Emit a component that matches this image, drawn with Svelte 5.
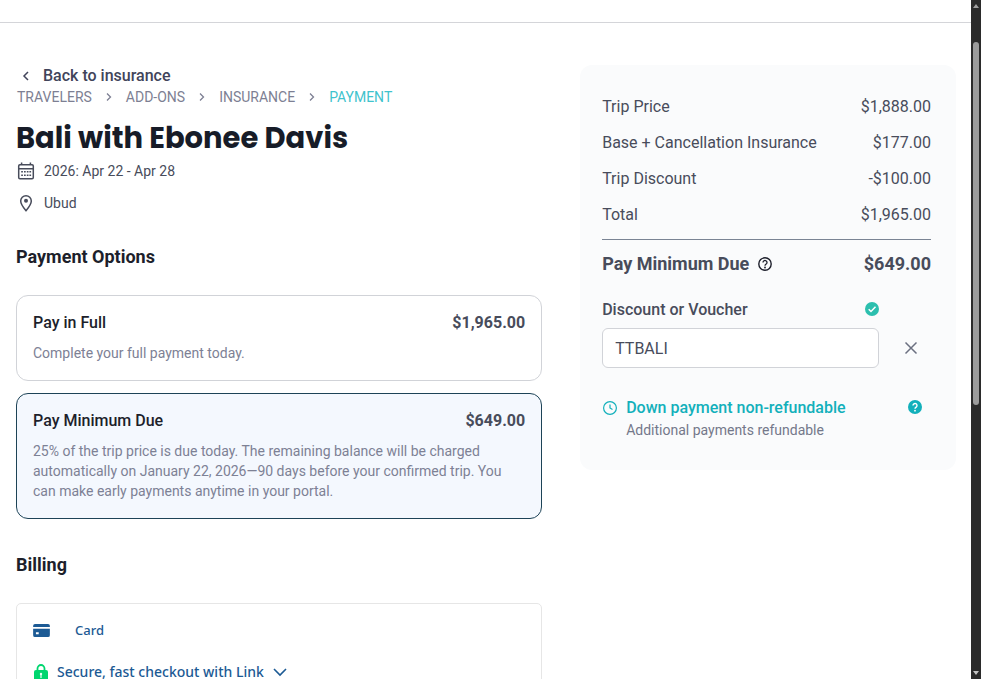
<script lang="ts">
	type Option = {
		id: string;
		title: string;
		amount: string;
		text: string;
	};

	const steps = ['Travelers', 'Add-ons', 'Insurance', 'Payment'];
	const currentStep = 'Payment';

	const options: Option[] = [
		{
			id: 'full',
			title: 'Pay in Full',
			amount: '$1,965.00',
			text: 'Complete your full payment today.'
		},
		{
			id: 'minimum',
			title: 'Pay Minimum Due',
			amount: '$649.00',
			text: '25% of the trip price is due today. The remaining balance will be charged automatically on January 22, 2026—90 days before your confirmed trip. You can make early payments anytime in your portal.'
		}
	];

	const lines = [
		{ label: 'Trip Price', value: '$1,888.00' },
		{ label: 'Base + Cancellation Insurance', value: '$177.00' },
		{ label: 'Trip Discount', value: '-$100.00' },
		{ label: 'Total', value: '$1,965.00' }
	];

	let selected = $state('minimum');
	let voucher = $state('TTBALI');

	const due = $derived(options.find((option) => option.id === selected) ?? options[0]);
</script>

<div class="window">
	<div class="page">
		<header class="topbar"></header>

		<main class="checkout">
			<div class="details">
				<a class="back" href="#insurance">
					<svg width="20" height="20" viewBox="0 0 20 20" aria-hidden="true">
						<path d="M12 6 8 10l4 4" fill="none" stroke="currentColor" stroke-width="1.5" />
					</svg>
					Back to insurance
				</a>

				<nav class="steps" aria-label="Checkout steps">
					{#each steps as step, i (step)}
						{#if i > 0}
							<svg width="10" height="10" viewBox="0 0 10 10" aria-hidden="true">
								<path d="m3 1.5 3.5 3.5L3 8.5" fill="none" stroke="currentColor" stroke-width="1.3" />
							</svg>
						{/if}
						<a class="step" class:step--current={step === currentStep} href={`#${step.toLowerCase()}`}>
							{step}
						</a>
					{/each}
				</nav>

				<h1>Bali with Ebonee Davis</h1>

				<div class="facts">
					<p class="fact">
						<svg width="20" height="20" viewBox="0 0 20 20" aria-hidden="true">
							<g fill="none" stroke="currentColor" stroke-width="1.5">
								<rect x="2.7" y="3.7" width="14.6" height="14" rx="1.2" />
								<path d="M2.7 7.8h14.6M5.6 1.5v2.4M14.4 1.5v2.4" />
							</g>
							<path
								d="M5.2 10h1.7v1.6H5.2zM8 10h1.7v1.6H8zM10.8 10h1.7v1.6h-1.7zM13.4 10h1.7v1.6h-1.7zM5.2 13.4h1.7V15H5.2zM8 13.4h1.7V15H8zM10.8 13.4h1.7V15h-1.7zM13.4 13.4h1.7V15h-1.7z"
								fill="currentColor"
							/>
						</svg>
						2026: Apr 22 - Apr 28
					</p>
					<p class="fact">
						<svg width="20" height="20" viewBox="0 0 20 20" aria-hidden="true">
							<path
								d="M10 17.7C6.5 13.6 4.7 10.6 4.7 8a5.3 5.3 0 0 1 10.6 0c0 2.6-1.8 5.6-5.3 9.7z"
								fill="none"
								stroke="currentColor"
								stroke-width="1.5"
							/>
							<circle cx="10" cy="7.8" r="2" fill="currentColor" />
						</svg>
						Ubud
					</p>
				</div>

				<h2>Payment Options</h2>
				<div class="options">
					{#each options as option (option.id)}
						<button
							class="option"
							class:option--selected={option.id === selected}
							type="button"
							aria-pressed={option.id === selected}
							onclick={() => (selected = option.id)}
						>
							<span class="option__head">
								<span class="option__title">{option.title}</span>
								<span class="option__amount">{option.amount}</span>
							</span>
							<span class="option__text">{option.text}</span>
						</button>
					{/each}
				</div>

				<h2>Billing</h2>
				<section class="billing" aria-label="Billing">
					<button class="method" type="button">
						<svg width="17" height="13" viewBox="0 0 18 14" aria-hidden="true">
							<path d="M2 0h14a2 2 0 0 1 2 2v1.2H0V2a2 2 0 0 1 2-2z" fill="currentColor" />
							<path
								d="M0 5h18v7a2 2 0 0 1-2 2H2a2 2 0 0 1-2-2zM3 9v2h3V9z"
								fill="currentColor"
								fill-rule="evenodd"
							/>
						</svg>
						Card
					</button>
					<button class="link-pay" type="button">
						<svg width="14" height="17" viewBox="0 0 14 17" aria-hidden="true">
							<path d="M3.5 8V4.5a3.5 3.5 0 0 1 7 0V8" fill="none" stroke="#00d66f" stroke-width="1.8" />
							<rect y="6" width="14" height="11" rx="2" fill="#00d66f" />
							<circle cx="7" cy="10" r="1.2" fill="#e8fff4" />
							<path d="M6.4 10.5h1.2V14H6.4z" fill="#e8fff4" />
						</svg>
						Secure, fast checkout with Link
						<svg width="14" height="10" viewBox="0 0 14 10" aria-hidden="true">
							<path d="m1 2 6 6 6-6" fill="none" stroke="currentColor" stroke-width="1.6" />
						</svg>
					</button>
				</section>
			</div>

			<aside class="summary" aria-label="Price summary">
				<dl>
					{#each lines as line (line.label)}
						<div class="line">
							<dt>{line.label}</dt>
							<dd>{line.value}</dd>
						</div>
					{/each}
				</dl>

				<div class="due">
					<span>{due.title}</span>
					<button class="due__help" type="button" aria-label="About this amount">
						<svg width="14" height="14" viewBox="0 0 14 14" aria-hidden="true">
							<circle cx="7" cy="7" r="6.2" fill="none" stroke="currentColor" stroke-width="1.4" />
							<path
								d="M5 5.5a2 2 0 1 1 3.2 1.6C7.4 7.7 7 8 7 8.7"
								fill="none"
								stroke="currentColor"
								stroke-width="1.3"
							/>
							<circle cx="7" cy="10.5" r="0.9" fill="currentColor" />
						</svg>
					</button>
					<strong>{due.amount}</strong>
				</div>

				<div class="voucher">
					<label for="voucher">Discount or Voucher</label>
					<svg class="voucher__ok" width="14" height="14" viewBox="0 0 14 14" aria-hidden="true">
						<circle cx="7" cy="7" r="7" fill="#2cbfae" />
						<path d="m3.7 7.2 2.3 2.3 4.5-4.7" fill="none" stroke="#fff" stroke-width="1.5" />
					</svg>
					<input id="voucher" type="text" bind:value={voucher} />
					<button type="button" aria-label="Remove voucher" onclick={() => (voucher = '')}>
						<svg width="14" height="14" viewBox="0 0 14 14" aria-hidden="true">
							<path d="m1.5 1.5 11 11m0-11-11 11" stroke="currentColor" stroke-width="1.5" />
						</svg>
					</button>
				</div>

				<div class="refund">
					<svg width="16" height="16" viewBox="0 0 16 16" aria-hidden="true">
						<g fill="none" stroke="currentColor" stroke-width="1.2">
							<circle cx="8" cy="8" r="6.4" />
							<path d="M8 4.5V8l2.5 1.5" />
						</g>
					</svg>
					<p>
						<strong>Down payment non-refundable</strong>
						<span>Additional payments refundable</span>
					</p>
					<button type="button" aria-label="Refund policy">
						<svg width="14" height="14" viewBox="0 0 14 14" aria-hidden="true">
							<circle cx="7" cy="7" r="7" fill="currentColor" />
							<path
								d="M5 5.5a2 2 0 1 1 3.2 1.6C7.4 7.7 7 8 7 8.7"
								fill="none"
								stroke="#fff"
								stroke-width="1.4"
							/>
							<circle cx="7" cy="10.7" r="0.9" fill="#fff" />
						</svg>
					</button>
				</div>
			</aside>
		</main>
	</div>

	<div class="scrollbar" aria-hidden="true">
		<svg width="6" height="4" viewBox="0 0 6 4"><path d="M3 0l3 4H0z" fill="#a0a0a0" /></svg>
		<div class="scrollbar__track">
			<div class="scrollbar__thumb"></div>
		</div>
		<svg width="6" height="4" viewBox="0 0 6 4"><path d="M0 0h6L3 4z" fill="#c4c4c4" /></svg>
	</div>
</div>

<style>
	:global(body) {
		background: #fff;
		color: #484c5b;
		font: 16px/24px Roboto, 'Liberation Sans', sans-serif;
	}

	h1,
	h2,
	p,
	dl,
	dd {
		margin: 0;
	}

	svg {
		display: block;
		flex: none;
	}

	a {
		color: inherit;
		text-decoration: none;
	}

	button {
		padding: 0;
		border: 0;
		background: none;
		color: inherit;
		font: inherit;
		text-align: left;
		cursor: pointer;
	}

	.window {
		display: flex;
		height: 100vh;
	}

	.page {
		flex: 1;
		min-width: 0;
		overflow: hidden;
	}

	.topbar {
		height: 22px;
		border-bottom: 1px solid #d4d5d9;
	}

	.checkout {
		display: grid;
		grid-template-columns: 7fr 5fr;
		align-items: start;
		gap: 38px;
		padding: 42px 15px 0 16px;
	}

	.back {
		display: flex;
		align-items: center;
		gap: 7px;
		color: #41445a;
		font-weight: 500;
		line-height: 22px;
	}

	.steps {
		display: flex;
		align-items: center;
		gap: 12px;
		padding-left: 1px;
		color: #7d7f93;
		font-size: 14px;
		line-height: 20px;
	}

	.step {
		text-transform: uppercase;
	}

	.step--current {
		color: #3fc3cd;
	}

	h1 {
		margin: 12px 0 4px;
		color: #171c28;
		font: 700 29px/38px Poppins, Inter, sans-serif;
	}

	.facts {
		display: grid;
		gap: 12px;
	}

	.fact {
		display: flex;
		align-items: center;
		gap: 8px;
		font-size: 14px;
		line-height: 20px;
	}

	h2 {
		margin: 32px 0 26px;
		color: #1d1f2b;
		font-size: 18px;
		font-weight: 700;
		line-height: 24px;
	}

	.options {
		display: grid;
		gap: 12px;
		padding-bottom: 2px;
	}

	.option {
		display: grid;
		gap: 8px;
		padding: 15px 16px 17px;
		border: 1px solid #d1d3d8;
		border-radius: 12px;
	}

	.option--selected {
		border-color: #1d4357;
		background: #f4f8fe;
	}

	.option__head {
		display: flex;
		justify-content: space-between;
	}

	.option__title {
		color: #1d1f2b;
		font-weight: 500;
	}

	.option__amount {
		font-weight: 700;
	}

	.option__text {
		color: #7d8195;
		font-size: 14px;
		line-height: 20px;
	}

	.billing {
		display: grid;
		gap: 18px;
		padding: 14px 16px;
		border: 1px solid #e6e6e6;
		border-radius: 5px;
		color: #1c5a94;
		font-family: 'Noto Sans', 'Open Sans', sans-serif;
		font-weight: 500;
	}

	.method {
		display: flex;
		align-items: center;
		gap: 25px;
		font-size: 13px;
	}

	.link-pay {
		display: flex;
		align-items: center;
		gap: 9px;
		padding-left: 1px;
		font-size: 14px;
	}

	.summary {
		padding: 30px 25px 30px 22px;
		border-radius: 12px;
		background: #fafbfc;
	}

	.line {
		display: flex;
		justify-content: space-between;
		margin-bottom: 12px;
	}

	.due {
		display: flex;
		align-items: center;
		gap: 9px;
		padding: 12px 0;
		border-top: 1px solid #7a8494;
		font-size: 18px;
		font-weight: 700;
	}

	.due strong {
		margin-left: auto;
		font-weight: 700;
	}

	.due__help {
		color: #1d1f2b;
	}

	.voucher {
		display: grid;
		grid-template-columns: auto 1fr 52px;
		align-items: center;
		row-gap: 6px;
		margin-top: 10px;
	}

	.voucher label {
		font-weight: 500;
	}

	.voucher__ok {
		align-self: start;
		justify-self: end;
		margin-top: 4px;
	}

	.voucher input {
		grid-column: 1 / 3;
		grid-row: 2;
		box-sizing: border-box;
		width: 100%;
		height: 40px;
		padding: 0 12px;
		border: 1px solid #d1d3d8;
		border-radius: 6px;
		background: #fff;
		color: inherit;
		font: inherit;
	}

	.voucher button {
		grid-column: 3;
		grid-row: 2;
		justify-self: center;
		padding-left: 12px;
		color: #6b7080;
	}

	.refund {
		display: flex;
		gap: 8px;
		align-items: flex-start;
		margin-top: 28px;
		color: #12b0bb;
	}

	.refund > svg,
	.refund button {
		margin-top: 4px;
	}

	.refund p {
		display: grid;
	}

	.refund strong {
		font-weight: 500;
	}

	.refund span {
		color: #74788a;
		font-size: 14px;
		line-height: 20px;
	}

	.refund button {
		margin-left: auto;
		margin-right: 9px;
	}

	.scrollbar {
		display: flex;
		flex-direction: column;
		align-items: center;
		gap: 34px;
		box-sizing: border-box;
		width: 10px;
		padding: 4px 0;
		background: #2b2b2b;
	}

	.scrollbar__track {
		flex: 1;
	}

	.scrollbar__thumb {
		width: 6px;
		height: 61%;
		border-radius: 3px;
		background: #9c9c9c;
	}
</style>
